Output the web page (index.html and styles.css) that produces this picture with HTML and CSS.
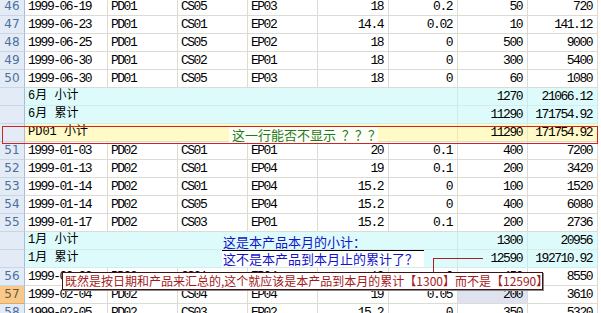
FILE: index.html
```html
<!DOCTYPE html>
<html>
<head>
<meta charset="utf-8">
<link rel="stylesheet" href="styles.css">
</head>
<body>
<div class="sheet">
  <div class="row"><div class="hdr">46</div><div class="c">1999-06-19</div><div class="c">PD01</div><div class="c">CS05</div><div class="c">EP03</div><div class="c r">18</div><div class="c r">0.2</div><div class="c r">50</div><div class="c r">720</div></div>
  <div class="row"><div class="hdr">47</div><div class="c">1999-06-23</div><div class="c">PD01</div><div class="c">CS01</div><div class="c">EP02</div><div class="c r">14.4</div><div class="c r">0.02</div><div class="c r">10</div><div class="c r">141.12</div></div>
  <div class="row"><div class="hdr">48</div><div class="c">1999-06-25</div><div class="c">PD01</div><div class="c">CS05</div><div class="c">EP02</div><div class="c r">18</div><div class="c r">0</div><div class="c r">500</div><div class="c r">9000</div></div>
  <div class="row"><div class="hdr">49</div><div class="c">1999-06-30</div><div class="c">PD01</div><div class="c">CS02</div><div class="c">EP01</div><div class="c r">18</div><div class="c r">0</div><div class="c r">300</div><div class="c r">5400</div></div>
  <div class="row"><div class="hdr">50</div><div class="c">1999-06-30</div><div class="c">PD01</div><div class="c">CS05</div><div class="c">EP03</div><div class="c r">18</div><div class="c r">0</div><div class="c r">60</div><div class="c r">1080</div></div>
  <div class="row sub"><div class="hdr"></div><div class="c lab">6月 小计</div><div class="c r">1270</div><div class="c r">21066.12</div></div>
  <div class="row sub"><div class="hdr"></div><div class="c lab">6月 累计</div><div class="c r">11290</div><div class="c r">171754.92</div></div>
  <div class="row tot"><div class="hdr"></div><div class="c lab">PD01 小计</div><div class="c r">11290</div><div class="c r">171754.92</div></div>
  <div class="row"><div class="hdr">51</div><div class="c">1999-01-03</div><div class="c">PD02</div><div class="c">CS01</div><div class="c">EP01</div><div class="c r">20</div><div class="c r">0.1</div><div class="c r">400</div><div class="c r">7200</div></div>
  <div class="row"><div class="hdr">52</div><div class="c">1999-01-13</div><div class="c">PD02</div><div class="c">CS01</div><div class="c">EP04</div><div class="c r">19</div><div class="c r">0.1</div><div class="c r">200</div><div class="c r">3420</div></div>
  <div class="row"><div class="hdr">53</div><div class="c">1999-01-14</div><div class="c">PD02</div><div class="c">CS01</div><div class="c">EP04</div><div class="c r">15.2</div><div class="c r">0</div><div class="c r">100</div><div class="c r">1520</div></div>
  <div class="row"><div class="hdr">54</div><div class="c">1999-01-14</div><div class="c">PD02</div><div class="c">CS05</div><div class="c">EP04</div><div class="c r">15.2</div><div class="c r">0</div><div class="c r">400</div><div class="c r">6080</div></div>
  <div class="row"><div class="hdr">55</div><div class="c">1999-01-17</div><div class="c">PD02</div><div class="c">CS03</div><div class="c">EP01</div><div class="c r">15.2</div><div class="c r">0.1</div><div class="c r">200</div><div class="c r">2736</div></div>
  <div class="row sub"><div class="hdr"></div><div class="c lab">1月 小计</div><div class="c r">1300</div><div class="c r">20956</div></div>
  <div class="row sub"><div class="hdr"></div><div class="c lab">1月 累计</div><div class="c r">12590</div><div class="c r">192710.92</div></div>
  <div class="row"><div class="hdr">56</div><div class="c">1999-02-03</div><div class="c">PD02</div><div class="c">CS01</div><div class="c">EP04</div><div class="c r">19</div><div class="c r">0</div><div class="c r">450</div><div class="c r">8550</div></div>
  <div class="row"><div class="hdr act">57</div><div class="c">1999-02-04</div><div class="c">PD02</div><div class="c">CS04</div><div class="c">EP04</div><div class="c r">19</div><div class="c r">0.05</div><div class="c r sel">200</div><div class="c r">3610</div></div>
  <div class="row"><div class="hdr">58</div><div class="c">1999-02-05</div><div class="c">PD02</div><div class="c">CS03</div><div class="c">EP02</div><div class="c r">15.2</div><div class="c r">0</div><div class="c r">350</div><div class="c r">5320</div></div>

  <div class="redframe"></div>
  <div class="greennote">这一行能否不显示 <span class="q">？？？</span></div>
  <div class="bluenote">
    <div class="bl1">这是本产品本月的小计：</div>
    <div class="bl2">这不是本产品到本月止的累计了？</div>
  </div>
  <div class="conn-h"></div>
  <div class="conn-v"></div>
  <div class="tip">既然是按日期和产品来汇总的,这个就应该是本产品到本月的累计【1300】而不是【12590】</div>
</div>
</body>
</html>
```

FILE: styles.css
```css
html, body {
  margin: 0;
  padding: 0;
  background: #ffffff;
  overflow: hidden;
}
.sheet {
  position: relative;
  margin-top: -2px;
  width: 598px;
  font-family: "Liberation Mono", "Noto Sans CJK SC", monospace;
  font-size: 13px;
  color: #000;
}
.row {
  display: grid;
  grid-template-columns: 25px 83px 70px 70px 70px 71px 69px 70px 70px;
  height: 18px;
}
.row > div {
  box-sizing: border-box;
  height: 18px;
  border-right: 1px solid #dcdcd4;
  border-bottom: 1px solid #dcdcd4;
  line-height: 17px;
  white-space: nowrap;
  overflow: hidden;
}
.c {
  padding: 0 4px 0 3px;
  letter-spacing: -1.5px;
}
.c.r {
  text-align: right;
  padding-right: 5px;
}
.hdr {
  background: #e3ebf6;
  border-right: 1px solid #a9bdd6 !important;
  border-bottom: 1px solid #c9d6e6 !important;
  color: #4d6f9e;
  font-family: "DejaVu Sans", sans-serif;
  font-size: 12px;
  text-align: center;
  letter-spacing: 0;
}
.hdr.act {
  background: #f9c98a;
  color: #6d5a3a;
  border-bottom: 1px solid #e0a860 !important;
}
.sel {
  background: #dfe3ef;
}
.sub {
  grid-template-columns: 25px 433px 70px 70px;
}
.sub .c {
  background: #ddfbfb;
  border-right-color: #d0e8e8;
  border-bottom-color: #d4ecec;
}
.tot {
  grid-template-columns: 25px 433px 70px 70px;
}
.tot .c {
  background: #fffac6;
  border-right-color: #ece6c0;
}
.lab {
  font-family: "Liberation Mono", "Noto Sans CJK SC", monospace;
  font-size: 12px;
  letter-spacing: 0 !important;
}
.redframe {
  position: absolute;
  left: 2px;
  top: 128px;
  width: 596px;
  height: 18px;
  box-sizing: border-box;
  border: 1px solid #d02424;
}
.greennote {
  position: absolute;
  left: 229px;
  top: 129px;
  width: 149px;
  height: 15px;
  line-height: 15px;
  background: #fdfff6;
  color: #1e7a1e;
  font-family: "Noto Sans CJK SC", sans-serif;
  font-size: 13px;
  padding-left: 3px;
  box-sizing: border-box;
  white-space: nowrap;
}
.q {
  margin-left: 3px;
}
.bluenote {
  position: absolute;
  left: 222px;
  top: 237px;
  width: 202px;
  font-family: "Noto Sans CJK SC", sans-serif;
  font-size: 13px;
  color: #1414c8;
}
.bl1 {
  height: 15px;
  line-height: 14px;
  border-bottom: 1px solid #000;
  padding-left: 1px;
  white-space: nowrap;
}
.bl2 {
  height: 16px;
  line-height: 16px;
  background: #ffffff;
  padding-left: 1px;
  white-space: nowrap;
}
.conn-h {
  position: absolute;
  left: 433px;
  top: 260px;
  width: 50px;
  height: 1px;
  background: #a82020;
}
.conn-v {
  position: absolute;
  left: 433px;
  top: 260px;
  width: 1px;
  height: 14px;
  background: #a82020;
}
.tip {
  position: absolute;
  left: 62px;
  top: 274px;
  width: 481px;
  height: 18px;
  box-sizing: border-box;
  border: 1px solid #3c1414;
  box-shadow: 1px 1px 0 #8a8a8a;
  background: #ffffff;
  color: #a31a1a;
  font-family: "Noto Sans CJK SC", sans-serif;
  font-size: 12px;
  line-height: 16px;
  padding-left: 2px;
  white-space: nowrap;
  overflow: hidden;
}
```
